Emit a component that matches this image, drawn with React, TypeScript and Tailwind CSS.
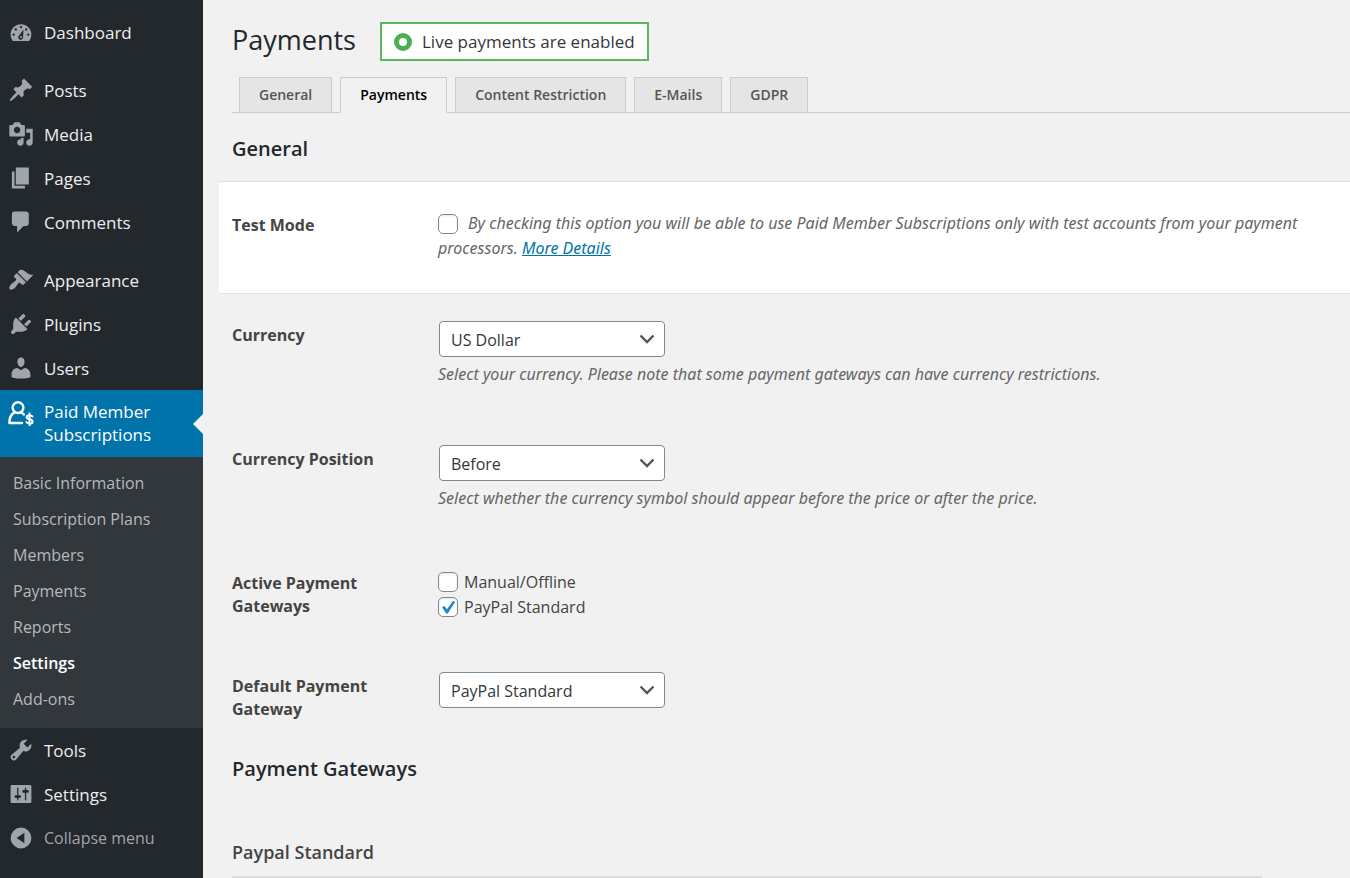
import React, { useState } from 'react';

const icons = {
    posts: 'M10.44 3.02l1.82-1.82 6.36 6.35-1.83 1.82c-1.05-.68-2.48-.57-3.41.36l-.75.75c-.92.93-1.04 2.35-.35 3.41l-1.83 1.82-2.41-2.41-2.8 2.79c-.42.42-3.38 2.71-3.8 2.29s1.86-3.39 2.28-3.81l2.79-2.79L4.1 9.36l1.83-1.82c1.05.69 2.48.57 3.4-.36l.75-.75c.93-.92 1.05-2.35.36-3.41z',
    media: 'M13 11V4c0-.55-.45-1-1-1h-1.67L9 1H5L3.67 3H2c-.55 0-1 .45-1 1v7c0 .55.45 1 1 1h10c.55 0 1-.45 1-1zM7 4.5c1.38 0 2.5 1.12 2.5 2.5S8.38 9.5 7 9.5 4.5 8.38 4.5 7 5.62 4.5 7 4.5zM14 6h5v10.5c0 1.38-1.12 2.5-2.5 2.5S14 17.88 14 16.5s1.12-2.5 2.5-2.5c.17 0 .34.02.5.05V9h-3V6zm-4 8.05V13h2v3.5c0 1.38-1.12 2.5-2.5 2.5S7 17.88 7 16.5 8.12 14 9.5 14c.17 0 .34.02.5.05z',
    pages: 'M6 15V2h10v13H6zm-1 1h8v2H3V5h2v11z',
    comments: 'M5 2h9c1.1 0 2 .9 2 2v7c0 1.1-.9 2-2 2h-2l-5 5v-5H5c-1.1 0-2-.9-2-2V4c0-1.1.9-2 2-2z',
    appearance: 'M14.48 11.06L7.41 3.99l1.5-1.5c.5-.56 2.3-.47 3.51.32 1.21.8 1.43 1.28 2.91 2.1 1.18.64 2.45 1.26 4.45.85zm-.71.71L6.7 4.7 4.93 6.47c-.39.39-.39 1.02 0 1.41l1.06 1.06c.39.39.39 1.03 0 1.42-.6.6-1.43 1.11-2.21 1.69-.35.26-.7.53-1.01.84C1.43 14.23.4 16.08 1.4 17.07c.99 1 2.84-.03 4.18-1.36.31-.31.58-.66.85-1.02.57-.78 1.08-1.61 1.69-2.21.39-.39 1.02-.39 1.41 0l1.06 1.06c.39.39 1.02.39 1.41 0z',
    plugins: 'M13.11 4.36L9.87 7.6 8 5.73l3.24-3.24c.35-.34 1.05-.2 1.56.32.52.51.66 1.21.31 1.55zm-8 1.77l.91-1.12 9.01 9.01-1.19.84c-.71.71-2.63 1.16-3.82 1.16H6.14L4.9 17.26c-.59.59-1.54.59-2.12 0-.59-.58-.59-1.53 0-2.12l1.24-1.24v-3.88c0-1.13.4-3.19 1.09-3.89zm7.26 3.97l3.24-3.24c.34-.35 1.04-.21 1.55.31.52.51.66 1.21.31 1.55l-3.24 3.25z',
    users: 'M10 9.25c-2.27 0-2.73-3.44-2.73-3.44C7 4.02 7.82 2 9.97 2c2.16 0 2.98 2.02 2.71 3.81 0 0-.41 3.44-2.68 3.44zm0 2.57L12.72 10c2.39 0 4.52 2.33 4.52 4.53v2.49s-3.65 1.13-7.24 1.13c-3.65 0-7.24-1.13-7.24-1.13v-2.49c0-2.25 1.94-4.48 4.47-4.48z',
    tools: 'M16.68 9.77c-1.34 1.34-3.3 1.67-4.95.99l-5.41 6.52c-.99.99-2.59.99-3.58 0s-.99-2.59 0-3.57l6.52-5.42c-.68-1.65-.35-3.61.99-4.95 1.28-1.28 3.12-1.62 4.72-1.06l-2.89 2.89 2.82 2.82 2.86-2.87c.53 1.58.18 3.39-1.08 4.65zM3.81 16.21c.4.39 1.04.39 1.43 0 .4-.4.4-1.04 0-1.43-.39-.4-1.03-.4-1.43 0-.39.39-.39 1.03 0 1.43z',
    settings: 'M18 16V4c0-.55-.45-1-1-1H3c-.55 0-1 .45-1 1v12c0 .55.45 1 1 1h14c.55 0 1-.45 1-1zM8 11h1c.55 0 1 .45 1 1s-.45 1-1 1H8v1.5c0 .28-.22.5-.5.5s-.5-.22-.5-.5V13H6c-.55 0-1-.45-1-1s.45-1 1-1h1V5.5c0-.28.22-.5.5-.5s.5.22.5.5V11zm5-2h-1c-.55 0-1-.45-1-1s.45-1 1-1h1V5.500c0-.28.22-.5.5-.5s.5.22.5.5V7h1c.55 0 1 .45 1 1s-.45 1-1 1h-1v5.5c0 .28-.22.5-.5.5s-.5-.22-.5-.5V9z',
    collapse: 'M10 2a8 8 0 1 0 0 16 8 8 0 0 0 0-16zM12.6 5.9v8.2L6.6 10z',
};

const Icon: React.FC<{ d: string }> = ({ d }) => (
    <svg viewBox="0 0 20 20" className="w-[26px] h-[26px] shrink-0" fill="currentColor" fillRule="evenodd" aria-hidden="true">
        <path d={d} />
    </svg>
);

const DashboardIcon = () => (
    <svg viewBox="0 0 20 20" className="w-[26px] h-[26px] shrink-0" fill="currentColor" aria-hidden="true">
        <path d="M3.76 17h12.48A7.95 7.95 0 0 0 18 12c0-4.41-3.58-8-8-8s-8 3.59-8 8c0 1.89.66 3.63 1.76 5z" />
        <g fill="#23282d">
            <circle cx="10" cy="6.2" r="0.9" />
            <circle cx="6" cy="8" r="0.9" />
            <circle cx="14" cy="8" r="0.9" />
            <circle cx="4.4" cy="12" r="0.9" />
            <circle cx="15.6" cy="12" r="0.9" />
            <path d="M11.9 8.2l-.3 5.3a1.9 1.9 0 1 1-3-1z" />
        </g>
        <circle cx="10" cy="13.8" r="0.8" />
    </svg>
);

const MemberIcon = () => (
    <svg viewBox="0 0 26 26" className="w-[26px] h-[26px] shrink-0" fill="none" stroke="currentColor" strokeWidth="2.4" strokeLinecap="round" strokeLinejoin="round" aria-hidden="true">
        <circle cx="10" cy="7.6" r="5.4" />
        <path d="M6.6 12.4C3.4 14 1.4 17.4 1.4 23H14" />
        <path d="M13.4 12.4l2.4 2" />
        <path strokeWidth="2" d="M24.4 16.4c-.7-.9-1.8-1.2-3-1.2-1.6 0-2.8.7-2.8 2 0 3 6 1.2 6 4.2 0 1.4-1.3 2.2-3 2.2-1.4 0-2.6-.5-3.2-1.5M21.5 13.4v12" />
    </svg>
);

const topItems = [
    { name: 'Posts', icon: icons.posts },
    { name: 'Media', icon: icons.media },
    { name: 'Pages', icon: icons.pages },
    { name: 'Comments', icon: icons.comments },
];

const siteItems = [
    { name: 'Appearance', icon: icons.appearance },
    { name: 'Plugins', icon: icons.plugins },
    { name: 'Users', icon: icons.users },
];

const bottomItems = [
    { name: 'Tools', icon: icons.tools },
    { name: 'Settings', icon: icons.settings },
];

const subItems = ['Basic Information', 'Subscription Plans', 'Members', 'Payments', 'Reports', 'Settings', 'Add-ons'];

const tabs = ['General', 'Payments', 'Content Restriction', 'E-Mails', 'GDPR'];

const MenuItem: React.FC<{ name: string; children: React.ReactNode }> = ({ name, children }) => (
    <li>
        <a href="#" className="flex items-center h-11 pl-2 gap-[10px] text-[#eeeeee] hover:text-[#00b9eb]">
            <span className="text-[#a0a5aa]">{children}</span>
            {name}
        </a>
    </li>
);

const Sidebar = () => (
    <nav className="w-[203px] shrink-0 bg-[#23282d] pt-[10px] text-[17px] leading-[23px]">
        <ul>
            <MenuItem name="Dashboard"><DashboardIcon /></MenuItem>
        </ul>
        <ul className="mt-[14px]">
            {topItems.map((item) => (
                <MenuItem key={item.name} name={item.name}><Icon d={item.icon} /></MenuItem>
            ))}
        </ul>
        <ul className="mt-[14px]">
            {siteItems.map((item) => (
                <MenuItem key={item.name} name={item.name}><Icon d={item.icon} /></MenuItem>
            ))}
            <li>
                <a href="#" className="relative flex items-start pt-[10px] pb-[11px] pl-2 gap-[10px] bg-[#0073aa] text-white">
                    <MemberIcon />
                    <span>Paid Member Subscriptions</span>
                    {/* arrow pointing at the content */}
                    <span className="absolute right-0 top-1/2 -translate-y-1/2 border-y-[10px] border-r-[10px] border-y-transparent border-r-[#f1f1f1]" />
                </a>
                <ul className="bg-[#32373c] pt-2 pb-[11px] text-base">
                    {subItems.map((name) => (
                        <li key={name}>
                            <a
                                href="#"
                                className={name === 'Settings'
                                    ? 'flex items-center h-9 pl-[13px] font-semibold text-white'
                                    : 'flex items-center h-9 pl-[13px] text-[#b4b9be] hover:text-[#00b9eb]'}
                            >
                                {name}
                            </a>
                        </li>
                    ))}
                </ul>
            </li>
            {bottomItems.map((item) => (
                <MenuItem key={item.name} name={item.name}><Icon d={item.icon} /></MenuItem>
            ))}
        </ul>
        <button type="button" className="flex items-center h-11 pl-2 gap-[10px] text-base text-[#a0a5aa]">
            <Icon d={icons.collapse} />
            Collapse menu
        </button>
    </nav>
);

const Checkbox: React.FC<{ id: string; checked: boolean; onChange: (v: boolean) => void }> = ({ id, checked, onChange }) => (
    <span className="relative inline-block w-5 h-5 align-text-bottom shrink-0">
        <input
            id={id}
            type="checkbox"
            checked={checked}
            onChange={(e) => onChange(e.target.checked)}
            className="block appearance-none w-5 h-5 rounded-[5px] border border-[#7e8993] bg-white shadow-[inset_0_1px_2px_rgba(0,0,0,0.1)]"
        />
        {checked && (
            <svg viewBox="0 0 20 20" className="absolute inset-0 w-5 h-5 pointer-events-none" fill="#1e8cbe" aria-hidden="true">
                <path d="M4 10.2l2.3-1.3 2.7 3.3 6-8.4 2.1 1.3-7.3 11.3h-1.6z" />
            </svg>
        )}
    </span>
);

const Select: React.FC<{ id: string; options: string[] }> = ({ id, options }) => (
    <div className="relative w-[226px] ml-px">
        <select id={id} className="block appearance-none w-full h-9 pl-[11px] pr-9 pt-px rounded border border-[#7e8993] bg-white text-base text-[#32373c]">
            {options.map((o) => <option key={o}>{o}</option>)}
        </select>
        <svg viewBox="0 0 16 16" className="absolute right-[10px] top-[10px] w-4 h-4 pointer-events-none" fill="none" stroke="#50555a" strokeWidth="2.4" aria-hidden="true">
            <path d="M1.5 4.5L8 11l6.5-6.5" />
        </svg>
    </div>
);

const Row: React.FC<{ label: string; htmlFor?: string; className: string; children: React.ReactNode }> = ({ label, htmlFor, className, children }) => (
    <div className={`flex pl-[13px] ${className}`}>
        <div className="w-[206px] shrink-0 pt-[3px] pr-12 font-bold text-[#444444] leading-[23px]">
            {htmlFor ? <label htmlFor={htmlFor}>{label}</label> : label}
        </div>
        <div className="flex-1">{children}</div>
    </div>
);

const Description: React.FC<{ children: React.ReactNode }> = ({ children }) => (
    <p className="mt-[5px] italic text-[#666666] leading-[25px] font-['Noto_Sans',sans-serif]">{children}</p>
);

const App: React.FC = () => {
    const [activeTab, setActiveTab] = useState('Payments');
    const [testMode, setTestMode] = useState(false);
    const [manual, setManual] = useState(false);
    const [paypal, setPaypal] = useState(true);

    return (
        <div className="flex min-h-screen bg-[#f1f1f1] text-base text-[#444444] font-['Open_Sans','Noto_Sans',sans-serif]">
            <Sidebar />
            <main className="flex-1 min-w-0 pl-4">
                <header className="flex items-start pl-[13px] pt-[22px]">
                    <h1 className="text-[27px] leading-9 text-[#23282d]">Payments</h1>
                    <div className="ml-6 flex items-center h-[39px] px-3 gap-[10px] border-2 border-[#5cb860] bg-white text-[17px] text-[#32373c]">
                        <span className="w-[18px] h-[18px] rounded-full border-[5px] border-[#4caf50]" />
                        Live payments are enabled
                    </div>
                </header>

                <div className="ml-[13px] mt-4 pl-[7px] flex gap-2 border-b border-[#cccccc]">
                    {tabs.map((tab) => (
                        <button
                            key={tab}
                            type="button"
                            onClick={() => setActiveTab(tab)}
                            className={tab === activeTab
                                ? 'h-9 -mb-px px-[19px] border border-[#cccccc] border-b-[#f1f1f1] bg-[#f1f1f1] text-sm font-semibold text-black'
                                : 'h-[35px] px-[19px] border border-b-0 border-[#cccccc] bg-[#e5e5e5] text-sm font-semibold text-[#555555]'}
                        >
                            {tab}
                        </button>
                    ))}
                </div>

                <h2 className="pl-[13px] mt-5 text-xl leading-8 font-semibold text-[#23282d]">General</h2>

                <div className="mt-4 h-[113px] pt-[29px] border-y border-[#e2e2e2] bg-white">
                    <Row label="Test Mode" htmlFor="test-mode" className="">
                        <p className="pr-7 italic text-[#666666] leading-[25px] font-['Noto_Sans',sans-serif]">
                            <Checkbox id="test-mode" checked={testMode} onChange={setTestMode} />
                            <label htmlFor="test-mode" className="ml-[10px]">
                                By checking this option you will be able to use Paid Member Subscriptions only with test accounts from your payment processors.
                            </label>{' '}
                            <a href="#" className="text-[#0073aa] underline">More Details</a>
                        </p>
                    </Row>
                </div>

                <Row label="Currency" htmlFor="currency" className="mt-[27px] h-[124px]">
                    <Select id="currency" options={['US Dollar', 'Euro', 'Pound Sterling']} />
                    <Description>
                        Select your currency. Please note that some payment gateways can have currency restrictions.
                    </Description>
                </Row>

                <Row label="Currency Position" htmlFor="currency-position" className="h-[124px]">
                    <Select id="currency-position" options={['Before', 'After']} />
                    <Description>
                        Select whether the currency symbol should appear before the price or after the price.
                    </Description>
                </Row>

                <Row label="Active Payment Gateways" className="h-[103px]">
                    <div className="flex items-center gap-[6px] h-[25px]">
                        <Checkbox id="gw-manual" checked={manual} onChange={setManual} />
                        <label htmlFor="gw-manual">Manual/Offline</label>
                    </div>
                    <div className="flex items-center gap-[6px] h-[25px]">
                        <Checkbox id="gw-paypal" checked={paypal} onChange={setPaypal} />
                        <label htmlFor="gw-paypal">PayPal Standard</label>
                    </div>
                </Row>

                <Row label="Default Payment Gateway" htmlFor="default-gateway" className="">
                    <Select id="default-gateway" options={['PayPal Standard', 'Manual/Offline']} />
                </Row>

                <h2 className="pl-[13px] mt-8 text-xl leading-8 font-semibold text-[#23282d]">Payment Gateways</h2>

                <h3 className="ml-[13px] mr-[88px] mt-[51px] pb-2 border-b-2 border-[#dddddd] text-lg leading-8 font-semibold text-[#444444]">
                    Paypal Standard
                </h3>
            </main>
        </div>
    );
};

export default App;
